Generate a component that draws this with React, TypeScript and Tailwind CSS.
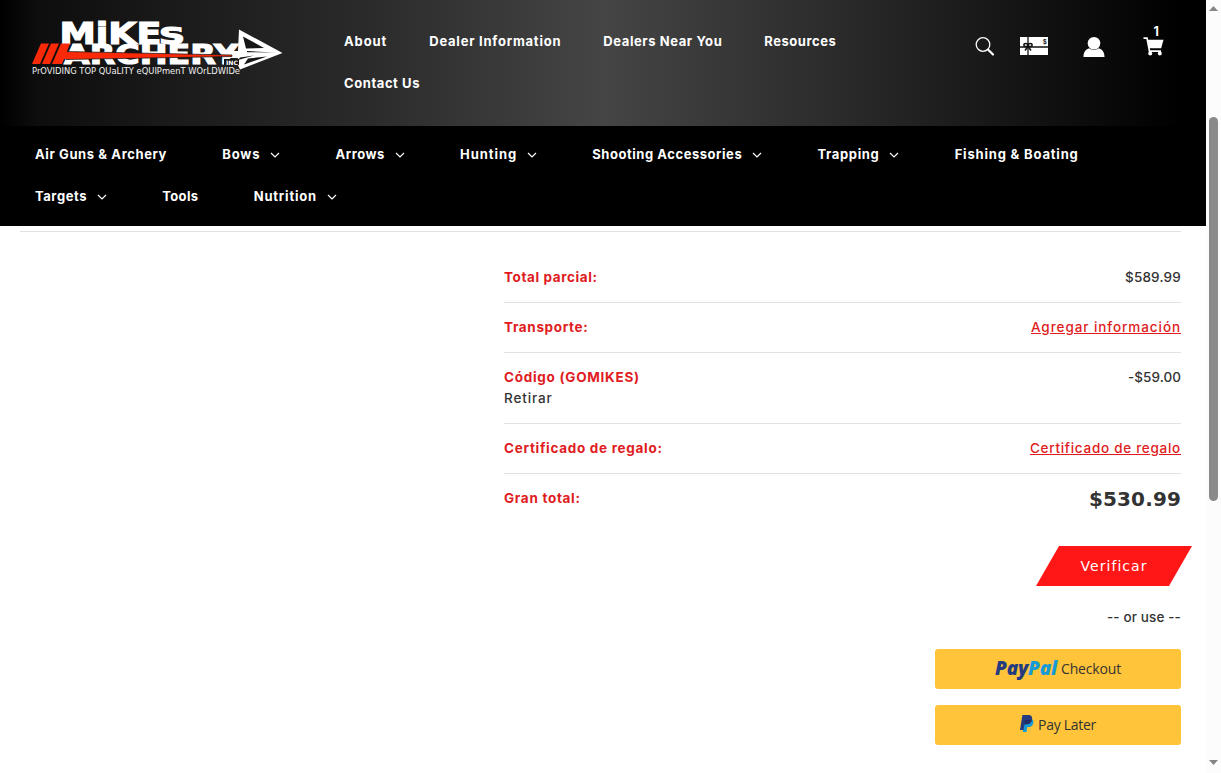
import clsx from "clsx";
import type { ReactNode } from "react";

const topLinks = [
  { label: "About", tracking: "tracking-[0.9px]" },
  { label: "Dealer Information", tracking: "tracking-[0.77px]" },
  { label: "Dealers Near You", tracking: "tracking-[0.59px]" },
  { label: "Resources", tracking: "tracking-[0.54px]" },
  { label: "Contact Us", tracking: "tracking-[0.57px]" },
];

const categories = [
  { label: "Air Guns & Archery", tracking: "tracking-[0.6px]", menu: false },
  { label: "Bows", tracking: "tracking-[0.85px]", menu: true },
  { label: "Arrows", tracking: "tracking-[0.52px]", menu: true },
  { label: "Hunting", tracking: "tracking-[0.93px]", menu: true },
  { label: "Shooting Accessories", tracking: "tracking-[0.54px]", menu: true },
  { label: "Trapping", tracking: "tracking-[0.65px]", menu: true },
  { label: "Fishing & Boating", tracking: "tracking-[0.82px]", menu: false },
  { label: "Targets", tracking: "tracking-[0.55px]", menu: true },
  { label: "Tools", tracking: "tracking-[0.38px]", menu: false },
  { label: "Nutrition", tracking: "tracking-[0.8px]", menu: true },
];

function Logo() {
  return (
    <svg width="252" height="58" viewBox="0 0 252 58" fill="#fff" className="block overflow-visible">
      <g fontFamily="DejaVu Sans" fontWeight="bold" stroke="#fff" strokeWidth="1.2">
        <text x="27.5" y="23.5" fontSize="30.5" textLength="102" lengthAdjust="spacingAndGlyphs">MiKE</text>
        <text x="127" y="23.5" fontSize="23" textLength="26" lengthAdjust="spacingAndGlyphs">S</text>
        <text x="32" y="43.5" fontSize="27" textLength="174" lengthAdjust="spacingAndGlyphs">ARCHERY</text>
      </g>
      {/* broadhead */}
      <path d="M207 9.5 L250.5 33 L208 49.5 L205 43 L206 38 H196 V31 H206 Z" />
      <g fill="#161616">
        <path d="M211 16.5 L232 28 L214 28.5 Z" />
        <path d="M212 44.5 L235 36.5 L216 38.5 Z" />
        <path d="M215 31 L243 32.6 L215 32.2 Z" />
        <path d="M206 40 L222 35.5 L208 37.5 Z" />
      </g>
      <path d="M34 31.5 L200 35 L200 36.5 L34 39.5 Z" fill="#fa2a08" stroke="#111" strokeWidth="0.7" />
      <g fill="#fa2a08">
        <path d="M9 23.5 H17 L8 44 H0 Z" />
        <path d="M19 23.5 H27 L18 44 H10 Z" />
        <path d="M29 23.5 H38 L35 31.5 L36 39 L32 39 L30 44 H20 Z" />
      </g>
      <rect x="192" y="39" width="15" height="6" fill="#161616" />
      <text x="194" y="44.5" fontSize="6" fontFamily="DejaVu Sans" textLength="12" lengthAdjust="spacingAndGlyphs">INC</text>
      <text x="0" y="53.5" fontSize="8" fill="#f0f0f0" fontFamily="DejaVu Sans" fontWeight="400" textLength="208" lengthAdjust="spacingAndGlyphs">
        PrOVIDING TOP QUaLITY eQUIPmenT WOrLDWIDe
      </text>
    </svg>
  );
}

function SearchIcon() {
  return (
    <svg width="20" height="20" viewBox="0 0 20 20" fill="none" stroke="#fff">
      <circle cx="8" cy="7.5" r="6.8" strokeWidth="1.3" />
      <path d="M13.2 12.7 L18 17.5" strokeWidth="2.2" strokeLinecap="round" />
    </svg>
  );
}

function GiftCardIcon() {
  return (
    <svg width="28" height="18" viewBox="0 0 28 18">
      <path d="M0 0H28V18H0Z" fill="#fff" />
      <path d="M8 0V18M0 10H28" stroke="#111" strokeWidth="1.3" />
      <g fill="none" stroke="#111" strokeWidth="1.5">
        <ellipse cx="5.8" cy="8" rx="1.9" ry="1.6" />
        <ellipse cx="10.2" cy="8" rx="1.9" ry="1.6" />
        <path d="M7.5 10 L5 13.5 M8.5 10 L11 13.5" />
      </g>
      <text x="23" y="7" fontSize="6.5" fontWeight="bold" fontFamily="Liberation Sans" fill="#111">$</text>
    </svg>
  );
}

function UserIcon() {
  return (
    <svg width="22" height="20" viewBox="0 0 22 20" fill="#fff">
      <circle cx="11" cy="6.3" r="6.3" />
      <path d="M0.5 20 C0.5 15 3 12.2 6.3 11.3 C9 13.6 13 13.6 15.7 11.3 C19 12.2 21.5 15 21.5 20 Z" />
    </svg>
  );
}

function CartIcon() {
  return (
    <svg width="21" height="19" viewBox="0 0 21 19" fill="#fff">
      <path d="M0.5 1.2 H4 L6.5 14.2 H18" fill="none" stroke="#fff" strokeWidth="1.7" />
      <path d="M4.5 2.8 H20.5 L18.2 11.3 H6.2 Z" />
      <circle cx="7.2" cy="16.5" r="2" />
      <circle cx="16.8" cy="16.5" r="2" />
    </svg>
  );
}

function Chevron() {
  return (
    <svg width="10" height="6" viewBox="0 0 10 6" fill="none" stroke="#fff" strokeWidth="1.2" className="ml-2.5">
      <path d="M1 1 L5 5 L9 1" />
    </svg>
  );
}

function PayPalMark() {
  return (
    <svg width="14" height="17" viewBox="0 0 14 17" className="-mt-0.5">
      <path d="M4.2 4 H11.8 C13.4 5 13.7 6.6 13.2 8.4 C12.5 11 10.6 12 8.3 12 H7.3 L6.5 17 H2.8 Z" fill="#179bd7" />
      <path d="M2.4 0 H8.2 C11.4 0 12.6 1.8 12 4.6 C11.4 7.7 9.3 9.2 6.4 9.2 H4.5 L3.5 15 H0 Z" fill="#253b80" />
      <path d="M4.8 5 H11.9 C11.3 7.8 9.3 9.2 6.4 9.2 H4.2 Z" fill="#222d65" />
    </svg>
  );
}

function TotalRow({ children, last }: { children: ReactNode; last?: boolean }) {
  return (
    <li className={clsx("flex items-start justify-between py-3.5", !last && "border-b border-[#e2e2e2]")}>
      {children}
    </li>
  );
}

export default function App() {
  return (
    <div className="flex h-[773px] w-[1221px] overflow-hidden bg-white font-['Inter',sans-serif] text-[13.5px] leading-[21px] font-medium text-[#333]">
      <div className="w-[1206px]">
        <header className="text-[13px] font-bold text-white">
          <div className="flex h-[126px] bg-[linear-gradient(90deg,#000_0%,#0d0d0d_3%,#1a1a1a_14%,#2a2a2a_30%,#454545_50%,#2a2a2a_70%,#181818_82%,#000_98%)]">
            <div className="w-[344px] pt-[20px] pl-8">
              <Logo />
            </div>
            <nav className="flex w-[540px] flex-wrap content-start gap-x-[42px] gap-y-[21px] pt-[31px]">
              {topLinks.map(({ label, tracking }) => (
                <a key={label} href="#" className={clsx("whitespace-nowrap", tracking)}>
                  {label}
                </a>
              ))}
            </nav>
            <div className="flex items-start pt-[37px] pl-[91px]">
              <SearchIcon />
              <div className="ml-[25px]">
                <GiftCardIcon />
              </div>
              <div className="ml-[34.5px]">
                <UserIcon />
              </div>
              <div className="relative ml-[38px]">
                <CartIcon />
                <span className="absolute -top-[15px] left-[11px] text-[12.5px] leading-5">1</span>
              </div>
            </div>
          </div>
          <nav className="flex h-[100px] flex-wrap content-start gap-x-[55.2px] gap-y-[21px] bg-black pt-[18px] pr-20 pl-[35px]">
            {categories.map(({ label, tracking, menu }) => (
              <a key={label} href="#" className="flex items-center whitespace-nowrap">
                <span className={tracking}>{label}</span>
                {menu && <Chevron />}
              </a>
            ))}
          </nav>
        </header>

        <main className="pr-[25px] pl-5">
          <div className="h-1.5 border-b border-[#e2e2e2]" />
          <div className="ml-auto flex w-[677px] flex-col items-end pt-[21px]">
            <ul className="w-full">
              <TotalRow>
                <span className="font-bold tracking-[0.6px] text-[#e01b22]">Total parcial:</span>
                <span className="tracking-[0.19px]">$589.99</span>
              </TotalRow>
              <TotalRow>
                <span className="font-bold tracking-[0.65px] text-[#e01b22]">Transporte:</span>
                <a href="#" className="tracking-[0.92px] text-[#e01b22] underline">Agregar información</a>
              </TotalRow>
              <TotalRow>
                <div className="flex flex-col">
                  <span className="font-bold tracking-[0.72px] text-[#e01b22]">Código (GOMIKES)</span>
                  <a href="#" className="tracking-[0.85px]">Retirar</a>
                </div>
                <span className="tracking-[0.06px]">-$59.00</span>
              </TotalRow>
              <TotalRow>
                <span className="font-bold tracking-[0.7px] text-[#e01b22]">Certificado de regalo:</span>
                <a href="#" className="tracking-[0.72px] text-[#e01b22] underline">Certificado de regalo</a>
              </TotalRow>
              <TotalRow last>
                <span className="font-bold tracking-[0.7px] text-[#e01b22]">Gran total:</span>
                <span className="font-['DejaVu_Sans'] text-[20px] leading-[23px] font-bold tracking-[0.13px]">$530.99</span>
              </TotalRow>
            </ul>
            <button className="mt-[21px] -mr-[11px] h-10 w-[156px] bg-[#ff1717] font-['DejaVu_Sans'] text-[14px] font-normal tracking-[1.04px] text-white [clip-path:polygon(23px_0,100%_0,133px_100%,0_100%)]">
              Verificar
            </button>
            <p className="mt-[21px] tracking-[0.13px]">-- or use --</p>
            <button className="mt-[21px] flex h-10 w-[246px] items-center justify-center rounded-[3px] bg-[#ffc439] pb-0.5 font-['Open_Sans'] text-[14px]">
              <span className="mr-1 text-[19px] font-extrabold tracking-[-0.21px] italic">
                <span className="text-[#253b80]">Pay</span>
                <span className="text-[#179bd7]">Pal</span>
              </span>
              <span className="tracking-[-0.17px]">Checkout</span>
            </button>
            <button className="mt-4 flex h-10 w-[246px] items-center justify-center gap-1 rounded-[3px] bg-[#ffc439] pb-0.5 font-['Open_Sans'] text-[14px]">
              <PayPalMark />
              <span className="tracking-[-0.28px]">Pay Later</span>
            </button>
          </div>
        </main>
      </div>

      <div className="flex w-[15px] flex-col items-center justify-between bg-[#fcfcfc] pt-1.5 pb-2">
        <svg width="9" height="5" viewBox="0 0 9 5" fill="#858585">
          <path d="M0 5 L4.5 0 L9 5Z" />
        </svg>
        <div className="mt-[106px] h-[384px] w-[9px] rounded-full bg-[#8a8a8a]" />
        <svg width="9" height="5" viewBox="0 0 9 5" fill="#858585" className="mt-auto">
          <path d="M0 0 L4.5 5 L9 0Z" />
        </svg>
      </div>
    </div>
  );
}
